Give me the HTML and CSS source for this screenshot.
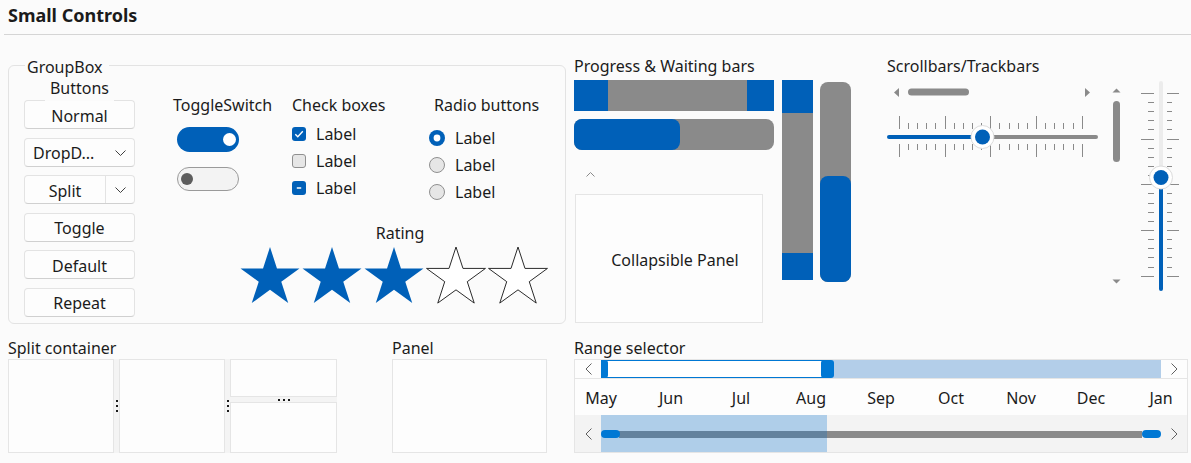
FILE: index.html
```html
<!DOCTYPE html>
<html lang="en">
<head>
<meta charset="utf-8">
<title>Small Controls</title>
<link rel="stylesheet" href="styles.css">
</head>
<body>
<header class="titlebar"><h1>Small Controls</h1></header>
<main class="layout">
  <fieldset class="groupbox">
    <legend>GroupBox</legend>
    <div class="gb-body">
      <div class="btn-col">
        <div class="btn-caption">Buttons</div>
        <div class="btn-list">
          <button class="btn">Normal</button>
          <button class="btn btn-drop"><span class="btn-text">DropD...</span><svg class="chev-down" width="11" height="6" viewBox="0 0 11 6"><polyline points="0.5,0.5 5.5,5.5 10.5,0.5" fill="none" stroke="#404040" stroke-width="1"/></svg></button>
          <div class="btn btn-split"><span class="split-main">Split</span><span class="split-arrow"><svg class="chev-down" width="11" height="6" viewBox="0 0 11 6"><polyline points="0.5,0.5 5.5,5.5 10.5,0.5" fill="none" stroke="#404040" stroke-width="1"/></svg></span></div>
          <button class="btn">Toggle</button>
          <button class="btn">Default</button>
          <button class="btn">Repeat</button>
        </div>
      </div>
      <div class="gb-right">
        <div class="gb-controls">
          <div class="col col-toggle">
            <div class="cap">ToggleSwitch</div>
            <div class="toggles">
              <span class="toggle on"><span class="knob"></span></span>
              <span class="toggle off"><span class="knob"></span></span>
            </div>
          </div>
          <div class="col col-check">
            <div class="cap">Check boxes</div>
            <ul class="opt-list">
              <li><svg width="14" height="14" viewBox="0 0 14 14"><rect width="14" height="14" rx="3" fill="#0060b8"/><path d="M3.3 7.2 5.8 9.7 10.8 4.3" fill="none" stroke="#fff" stroke-width="1.4"/></svg>Label</li>
              <li><svg width="14" height="14" viewBox="0 0 14 14"><rect x="0.5" y="0.5" width="13" height="13" rx="2.5" fill="#e6e6e6" stroke="#8f8f8f"/></svg>Label</li>
              <li><svg width="14" height="14" viewBox="0 0 14 14"><rect width="14" height="14" rx="3" fill="#0060b8"/><path d="M4.8 7h4.4" fill="none" stroke="#fff" stroke-width="1.5"/></svg>Label</li>
            </ul>
          </div>
          <div class="col col-radio">
            <div class="cap">Radio buttons</div>
            <ul class="opt-list radio-list">
              <li><svg width="16" height="16" viewBox="0 0 16 16"><circle cx="8" cy="8" r="8" fill="#0060b8"/><circle cx="8" cy="8" r="3.4" fill="#fff"/></svg>Label</li>
              <li><svg width="16" height="16" viewBox="0 0 16 16"><circle cx="8" cy="8" r="7.5" fill="#e6e6e6" stroke="#8f8f8f"/></svg>Label</li>
              <li><svg width="16" height="16" viewBox="0 0 16 16"><circle cx="8" cy="8" r="7.5" fill="#e6e6e6" stroke="#8f8f8f"/></svg>Label</li>
            </ul>
          </div>
        </div>
        <div class="rating">
          <div class="rating-cap">Rating</div>
          <div class="stars">
            <svg viewBox="0 0 62 58"><polygon class="star-full" points="31,1 37.97,22.41 60.48,22.42 42.27,35.66 49.22,57.08 31,43.85 12.78,57.08 19.73,35.66 1.52,22.42 24.03,22.41"/></svg>
            <svg viewBox="0 0 62 58"><polygon class="star-full" points="31,1 37.97,22.41 60.48,22.42 42.27,35.66 49.22,57.08 31,43.85 12.78,57.08 19.73,35.66 1.52,22.42 24.03,22.41"/></svg>
            <svg viewBox="0 0 62 58"><polygon class="star-full" points="31,1 37.97,22.41 60.48,22.42 42.27,35.66 49.22,57.08 31,43.85 12.78,57.08 19.73,35.66 1.52,22.42 24.03,22.41"/></svg>
            <svg viewBox="0 0 62 58"><polygon class="star-empty" points="31,1 37.97,22.41 60.48,22.42 42.27,35.66 49.22,57.08 31,43.85 12.78,57.08 19.73,35.66 1.52,22.42 24.03,22.41"/></svg>
            <svg viewBox="0 0 62 58"><polygon class="star-empty" points="31,1 37.97,22.41 60.48,22.42 42.27,35.66 49.22,57.08 31,43.85 12.78,57.08 19.73,35.66 1.52,22.42 24.03,22.41"/></svg>
          </div>
        </div>
      </div>
    </div>
  </fieldset>

  <section class="top-right">
    <div class="prog">
      <div class="cap">Progress &amp; Waiting bars</div>
      <div class="prog-body">
        <div class="prog-left">
          <div class="hwait"><span class="seg seg-l"></span><span class="seg seg-r"></span></div>
          <div class="pbar"><div class="pbar-fill"></div></div>
          <div class="chev-row"><svg width="9" height="5" viewBox="0 0 9 5"><polyline points="0.5,4.5 4.5,0.5 8.5,4.5" fill="none" stroke="#8a8a8a" stroke-width="1"/></svg></div>
          <div class="collapsible">Collapsible Panel</div>
        </div>
        <div class="vwait"><span class="vseg vseg-t"></span><span class="vseg vseg-b"></span></div>
        <div class="vprog"><div class="vprog-fill"></div></div>
      </div>
    </div>
    <div class="scroll">
      <div class="cap">Scrollbars/Trackbars</div>
      <div class="scroll-body">
        <div class="sb-left">
          <svg class="hscroll" width="211" height="9" viewBox="0 0 211 9">
            <polygon points="12,0 7,4.5 12,9" fill="#8a8a8a"/>
            <rect x="21" y="0.5" width="61" height="7" rx="3.5" fill="#8a8a8a"/>
            <polygon points="198,0 203,4.5 198,9" fill="#8a8a8a"/>
          </svg>
          <svg class="htrack" width="211" height="41" viewBox="0 0 211 41">
            <path d="M12.5 0V13M58.5 0V13M103.5 0V13M149.5 0V13M195.5 0V13M21.5 7V13M30.5 7V13M39.5 7V13M48.5 7V13M67.5 7V13M76.5 7V13M85.5 7V13M94.5 7V13M112.5 7V13M122.5 7V13M131.5 7V13M140.5 7V13M158.5 7V13M167.5 7V13M176.5 7V13M186.5 7V13M12.5 28V41M58.5 28V41M103.5 28V41M149.5 28V41M195.5 28V41M21.5 28V34M30.5 28V34M39.5 28V34M48.5 28V34M67.5 28V34M76.5 28V34M85.5 28V34M94.5 28V34M112.5 28V34M122.5 28V34M131.5 28V34M140.5 28V34M158.5 28V34M167.5 28V34M176.5 28V34M186.5 28V34" stroke="#8a8a8a" stroke-width="1" fill="none"/>
            <line x1="95" y1="21" x2="209" y2="21" stroke="#8a8a8a" stroke-width="4" stroke-linecap="round"/>
            <line x1="2" y1="21" x2="95" y2="21" stroke="#0060b8" stroke-width="4" stroke-linecap="round"/>
            <circle cx="95.5" cy="21" r="11.5" fill="#fff" stroke="#dcdcdc" stroke-width="1"/>
            <circle cx="95.5" cy="21" r="7.5" fill="#0060b8"/>
          </svg>
        </div>
        <svg class="vscroll" width="9" height="196" viewBox="0 0 9 196">
          <polygon points="0.5,4.5 4.5,0.5 8.5,4.5" fill="#8a8a8a"/>
          <rect x="1" y="13" width="7" height="61" rx="3.5" fill="#8a8a8a"/>
          <polygon points="0.5,191.5 8.5,191.5 4.5,195.5" fill="#8a8a8a"/>
        </svg>
        <svg class="vtrack" width="38" height="210" viewBox="0 0 38 210">
          <path d="M0 12.5H13M0 58.5H13M0 103.5H13M0 149.5H13M0 195.5H13M7 21.5H13M7 30.5H13M7 39.5H13M7 48.5H13M7 67.5H13M7 76.5H13M7 85.5H13M7 94.5H13M7 112.5H13M7 122.5H13M7 131.5H13M7 140.5H13M7 158.5H13M7 167.5H13M7 176.5H13M7 186.5H13M26 12.5H38M26 58.5H38M26 103.5H38M26 149.5H38M26 195.5H38M26 21.5H31M26 30.5H31M26 39.5H31M26 48.5H31M26 67.5H31M26 76.5H31M26 85.5H31M26 94.5H31M26 112.5H31M26 122.5H31M26 131.5H31M26 140.5H31M26 158.5H31M26 167.5H31M26 176.5H31M26 186.5H31" stroke="#8a8a8a" stroke-width="1" fill="none"/>
          <line x1="20" y1="2" x2="20" y2="96" stroke="#ececec" stroke-width="4" stroke-linecap="round"/>
          <line x1="20" y1="96" x2="20" y2="208" stroke="#0060b8" stroke-width="4" stroke-linecap="round"/>
          <circle cx="20" cy="96.5" r="11.5" fill="#fff" stroke="#dcdcdc" stroke-width="1"/>
          <circle cx="20" cy="96.5" r="7.5" fill="#0060b8"/>
        </svg>
      </div>
    </div>
  </section>

  <section class="bottom-left">
    <div class="split-sec">
      <div class="cap">Split container</div>
      <div class="split">
        <div class="pane p1"></div>
        <div class="vsplit"><span class="dot"></span><span class="dot"></span><span class="dot"></span></div>
        <div class="pane p2"></div>
        <div class="vsplit"><span class="dot"></span><span class="dot"></span><span class="dot"></span></div>
        <div class="col3">
          <div class="pane p3a"></div>
          <div class="hsplit"><span class="dot"></span><span class="dot"></span><span class="dot"></span></div>
          <div class="pane p3b"></div>
        </div>
      </div>
    </div>
    <div class="panel-sec">
      <div class="cap">Panel</div>
      <div class="panel"></div>
    </div>
  </section>

  <section class="range">
    <div class="cap">Range selector</div>
    <div class="rbox">
      <div class="r-top">
        <span class="r-arrow"><svg width="7" height="12" viewBox="0 0 7 12"><polyline points="6.5,0.5 1,6 6.5,11.5" fill="none" stroke="#606060" stroke-width="1"/></svg></span>
        <div class="r-track">
          <div class="r-sel"></div>
          <span class="r-handle h-l"></span>
          <span class="r-handle h-r"></span>
        </div>
        <span class="r-arrow"><svg width="7" height="12" viewBox="0 0 7 12"><polyline points="0.5,0.5 6,6 0.5,11.5" fill="none" stroke="#606060" stroke-width="1"/></svg></span>
      </div>
      <div class="r-months">
        <span>May</span><span>Jun</span><span>Jul</span><span>Aug</span><span>Sep</span><span>Oct</span><span>Nov</span><span>Dec</span><span>Jan</span>
      </div>
      <div class="r-bottom">
        <span class="r-arrow"><svg width="7" height="12" viewBox="0 0 7 12"><polyline points="6.5,0.5 1,6 6.5,11.5" fill="none" stroke="#606060" stroke-width="1"/></svg></span>
        <div class="rb-track">
          <span class="rb-line"></span>
          <span class="rb-hl"></span>
          <span class="rb-handle rb-l"></span>
          <span class="rb-handle rb-r"></span>
        </div>
        <span class="r-arrow"><svg width="7" height="12" viewBox="0 0 7 12"><polyline points="0.5,0.5 6,6 0.5,11.5" fill="none" stroke="#606060" stroke-width="1"/></svg></span>
      </div>
    </div>
  </section>
</main>
</body>
</html>
```
FILE: styles.css
```css
* { box-sizing: border-box; }
html, body { margin: 0; padding: 0; }
body {
  width: 1191px;
  height: 463px;
  overflow: hidden;
  background: #fbfbfb;
  color: #1b1b1b;
  font-family: "Noto Sans", "Liberation Sans", sans-serif;
  font-size: 16px;
  line-height: 20px;
}
svg { display: block; }

.titlebar {
  margin-left: 4px;
  height: 35px;
  border-bottom: 1px solid #d5d5d5;
}
.titlebar h1 {
  margin: 0;
  padding-left: 4px;
  font-size: 18px;
  line-height: 30px;
  font-weight: 700;
}

.layout {
  display: grid;
  grid-template-columns: 558px 614px;
  grid-template-rows: 290px 138px;
  column-gap: 8px;
  padding-left: 8px;
}

.cap { line-height: 20px; white-space: nowrap; }

/* Group box */
.groupbox {
  margin: 18px 0 0;
  padding: 0;
  min-width: 0;
  height: 271px;
  border: 1px solid #e3e3e3;
  border-radius: 6px;
}
.groupbox legend {
  margin-left: 16px;
  padding: 3px 6px 0 2px;
  line-height: 22px;
}
.gb-body { display: flex; padding-left: 15px; }

.btn-col { width: 111px; flex: none; }
.btn-caption {
  position: relative;
  z-index: 1;
  width: max-content;
  margin: 0 auto -1px;
  padding: 0 5px 3px;
  background: #fbfbfb;
}
.btn-list { display: flex; flex-direction: column; gap: 8.5px; }
.btn {
  display: flex;
  align-items: center;
  justify-content: center;
  height: 29px;
  margin: 0;
  padding: 2px 0 0;
  border: 1px solid #e3e3e3;
  border-bottom-color: #d0d0d0;
  border-radius: 4px;
  background: #fdfdfd;
  color: #1b1b1b;
  font: inherit;
  line-height: 20px;
}
.btn-drop { justify-content: space-between; padding-left: 8px; padding-right: 8px; }
.btn-drop .chev-down { margin-top: -1px; }
.btn-split { padding: 0; align-items: stretch; }
.split-main { flex: 1; display: flex; align-items: center; justify-content: center; padding-top: 2px; }
.split-arrow {
  width: 29px;
  display: flex;
  align-items: center;
  justify-content: center;
  border-left: 1px solid #e3e3e3;
}

.gb-right { margin-left: 38px; padding-top: 17px; flex: 1; }
.gb-controls { display: flex; height: 128px; }
.col-toggle { width: 119px; }
.col-check { width: 137px; }
.col-radio { flex: 1; }
.col-radio .cap { padding-left: 5px; }

.toggles { display: flex; flex-direction: column; gap: 15px; margin-top: 12px; padding-left: 4px; }
.toggle { display: flex; align-items: center; width: 62px; border-radius: 13px; }
.toggle.on { height: 25px; background: #0060b8; justify-content: flex-end; padding-right: 3px; }
.toggle.on .knob { width: 13px; height: 13px; border-radius: 50%; background: #fff; }
.toggle.off { height: 24px; background: #f3f3f3; border: 1px solid #9a9a9a; padding-left: 3px; }
.toggle.off .knob { width: 12px; height: 12px; border-radius: 50%; background: #5d5d5d; }

.opt-list { list-style: none; margin: 5px 0 0; padding: 0; }
.opt-list li { display: flex; align-items: center; gap: 10px; height: 27px; }
.radio-list { margin-top: 9px; }

.rating { margin-left: 66px; width: 310px; }
.rating-cap { text-align: center; padding-left: 12px; }
.stars { display: flex; margin-top: 3px; }
.stars svg { width: 62px; height: 58px; }
.star-full { fill: #0060b8; }
.star-empty { fill: #fff; stroke: #2b2b2b; stroke-width: 1; }

/* Progress & scroll */
.top-right { display: flex; padding-top: 21px; }
.prog { width: 277px; }
.prog-body { display: flex; align-items: flex-start; margin-top: 4px; }
.prog-left { width: 200px; }
.hwait { display: flex; justify-content: space-between; height: 31px; background: #8a8a8a; }
.seg { background: #0060b8; }
.seg-l { width: 34px; }
.seg-r { width: 27px; }
.pbar { margin-top: 8px; height: 31px; border-radius: 8px; background: #8a8a8a; }
.pbar-fill { width: 106px; height: 100%; border-radius: 8px; background: #0060b8; }
.chev-row { height: 44px; padding: 22px 0 0 12px; }
.collapsible {
  margin-left: 1px;
  width: 188px;
  height: 129px;
  display: flex;
  align-items: center;
  justify-content: center;
  padding: 3px 0 0 12px;
  border: 1px solid #e5e5e5;
  background: #fdfdfd;
}
.vwait {
  margin-left: 8px;
  width: 31px;
  height: 200px;
  display: flex;
  flex-direction: column;
  justify-content: space-between;
  background: #8a8a8a;
}
.vseg { background: #0060b8; }
.vseg-t { height: 33px; }
.vseg-b { height: 27px; }
.vprog {
  margin: 2px 0 0 7px;
  width: 31px;
  height: 200px;
  display: flex;
  flex-direction: column;
  justify-content: flex-end;
  border-radius: 8px;
  background: #8a8a8a;
}
.vprog-fill { height: 106px; border-radius: 8px; background: #0060b8; }

.scroll { margin-left: 36px; }
.scroll-body { display: flex; align-items: flex-start; }
.sb-left { width: 211px; }
.hscroll { margin-top: 12px; }
.htrack { margin-top: 19px; }
.vscroll { margin: 12px 0 0 14px; }
.vtrack { margin: 5px 0 0 20px; }

/* Bottom left */
.bottom-left { display: flex; padding-top: 13px; }
.split-sec { width: 329px; }
.split { display: flex; height: 94px; margin-top: 1px; background: #f4f4f4; }
.pane { border: 1px solid #e5e5e5; background: #fdfdfd; }
.p1, .p2 { width: 106px; }
.col3 { width: 107px; display: flex; flex-direction: column; }
.p3a { height: 38px; }
.p3b { flex: 1; }
.vsplit {
  width: 5px;
  display: flex;
  flex-direction: column;
  justify-content: center;
  gap: 3px;
  padding-left: 2px;
}
.hsplit {
  height: 5px;
  display: flex;
  justify-content: center;
  align-items: flex-start;
  padding-top: 2px;
  gap: 3px;
}
.dot { display: block; width: 2px; height: 2px; background: #1b1b1b; }
.panel-sec { margin-left: 55px; width: 155px; }
.panel { margin-top: 1px; height: 94px; border: 1px solid #e5e5e5; background: #fdfdfd; }

/* Range selector */
.range { padding-top: 13px; }
.rbox { margin-top: 1px; height: 94px; border: 1px solid #e5e5e5; background: #fdfdfd; }
.r-top {
  display: grid;
  grid-template-columns: 26px 560px 26px;
  height: 19px;
  border-bottom: 1px solid #e5e5e5;
}
.r-arrow { display: flex; align-items: center; justify-content: center; }
.r-track { position: relative; overflow: hidden; background: #b3cee9; }
.r-sel {
  width: 226px;
  height: 100%;
  background: #fff;
  border-top: 1px solid #0078d4;
  border-bottom: 1px solid #0078d4;
}
.r-handle { position: absolute; top: 0; bottom: 0; width: 13px; border-radius: 3px; background: #0078d4; }
.h-l { left: -6px; }
.h-r { left: 220px; }
.r-months {
  display: grid;
  grid-template-columns: repeat(9, 70px);
  margin-left: -9px;
  height: 36px;
  align-items: center;
  padding-top: 2px;
  text-align: center;
}
.r-bottom {
  display: grid;
  grid-template-columns: 26px 560px 26px;
  height: 37px;
  background: #f3f3f3;
}
.rb-track { position: relative; }
.rb-line { position: absolute; left: 18px; right: 19px; top: 16px; height: 7px; background: #8a8a8a; }
.rb-hl { position: absolute; left: 0; top: 0; bottom: 0; width: 226px; background: rgba(0, 110, 210, 0.28); }
.rb-handle { position: absolute; top: 15px; width: 19px; height: 8px; border-radius: 4px; background: #0078d4; }
.rb-l { left: 0; }
.rb-r { right: 0; }
```
